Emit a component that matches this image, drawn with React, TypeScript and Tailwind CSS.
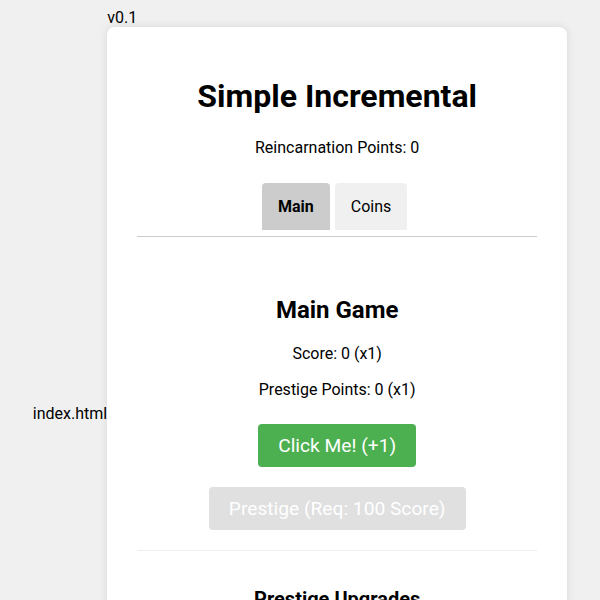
import React from 'react';

const upgrades = [
  { name: 'Score Multiplier', cost: 1 },
  { name: 'Auto Clicker', cost: 5 },
  { name: 'Better Prestige', cost: 10 },
];

const App: React.FC = () => {
  return (
    <div className="min-h-screen bg-[#f0f0f0] flex justify-center items-center py-2 font-['Roboto',sans-serif] text-base leading-[19px] text-black">
      <span>index.html</span>
      <div className="flex flex-col">
        <span>v0.1</span>
        <div className="w-[460px] bg-white rounded-lg shadow-[0_0_10px_rgba(0,0,0,0.1)] px-[30px] pt-[51px] pb-[56px] text-center">
          {/* Titre */}
          <h1 className="text-[32px] leading-[37.5px] font-bold">Simple Incremental</h1>
          <p className="mt-[22px]">Reincarnation Points: 0</p>

          {/* Onglets */}
          <div className="mt-[26px] pb-[6px] border-b border-[#ccc] flex justify-center">
            <button className="mr-[5px] bg-[#ccc] font-bold px-4 py-[14px] rounded-t">Main</button>
            <button className="mr-[5px] bg-[#f0f0f0] px-4 py-[14px] rounded-t">Coins</button>
          </div>

          {/* Jeu principal */}
          <div className="pt-[59px]">
            <h2 className="text-2xl leading-[28px] font-bold">Main Game</h2>
            <p className="mt-5">Score: 0 (x1)</p>
            <p className="mt-[17px]">Prestige Points: 0 (x1)</p>
            <div className="mt-[25px] flex flex-col items-center gap-5">
              <button className="bg-[#4CAF50] text-white text-[19.2px] leading-[23px] px-5 py-[10px] rounded">Click Me! (+1)</button>
              <button disabled className="bg-[#ccc] opacity-60 text-white text-[19.2px] leading-[23px] px-5 py-[10px] rounded cursor-not-allowed">
                Prestige (Req: 100 Score)
              </button>
            </div>
          </div>

          {/* Améliorations */}
          <div className="mt-5 border-t border-[#eee] pt-[37px]">
            <h3 className="text-xl leading-[23px] font-bold">Prestige Upgrades</h3>
            <div className="mt-4 flex flex-col items-center gap-2.5">
              {upgrades.map((u) => (
                <button key={u.name} disabled className="bg-[#ccc] opacity-60 text-white px-4 py-[10px] rounded w-[260px]">
                  {u.name} (Cost: {u.cost} PP)
                </button>
              ))}
            </div>
          </div>
        </div>
      </div>
    </div>
  );
};

export default App;
